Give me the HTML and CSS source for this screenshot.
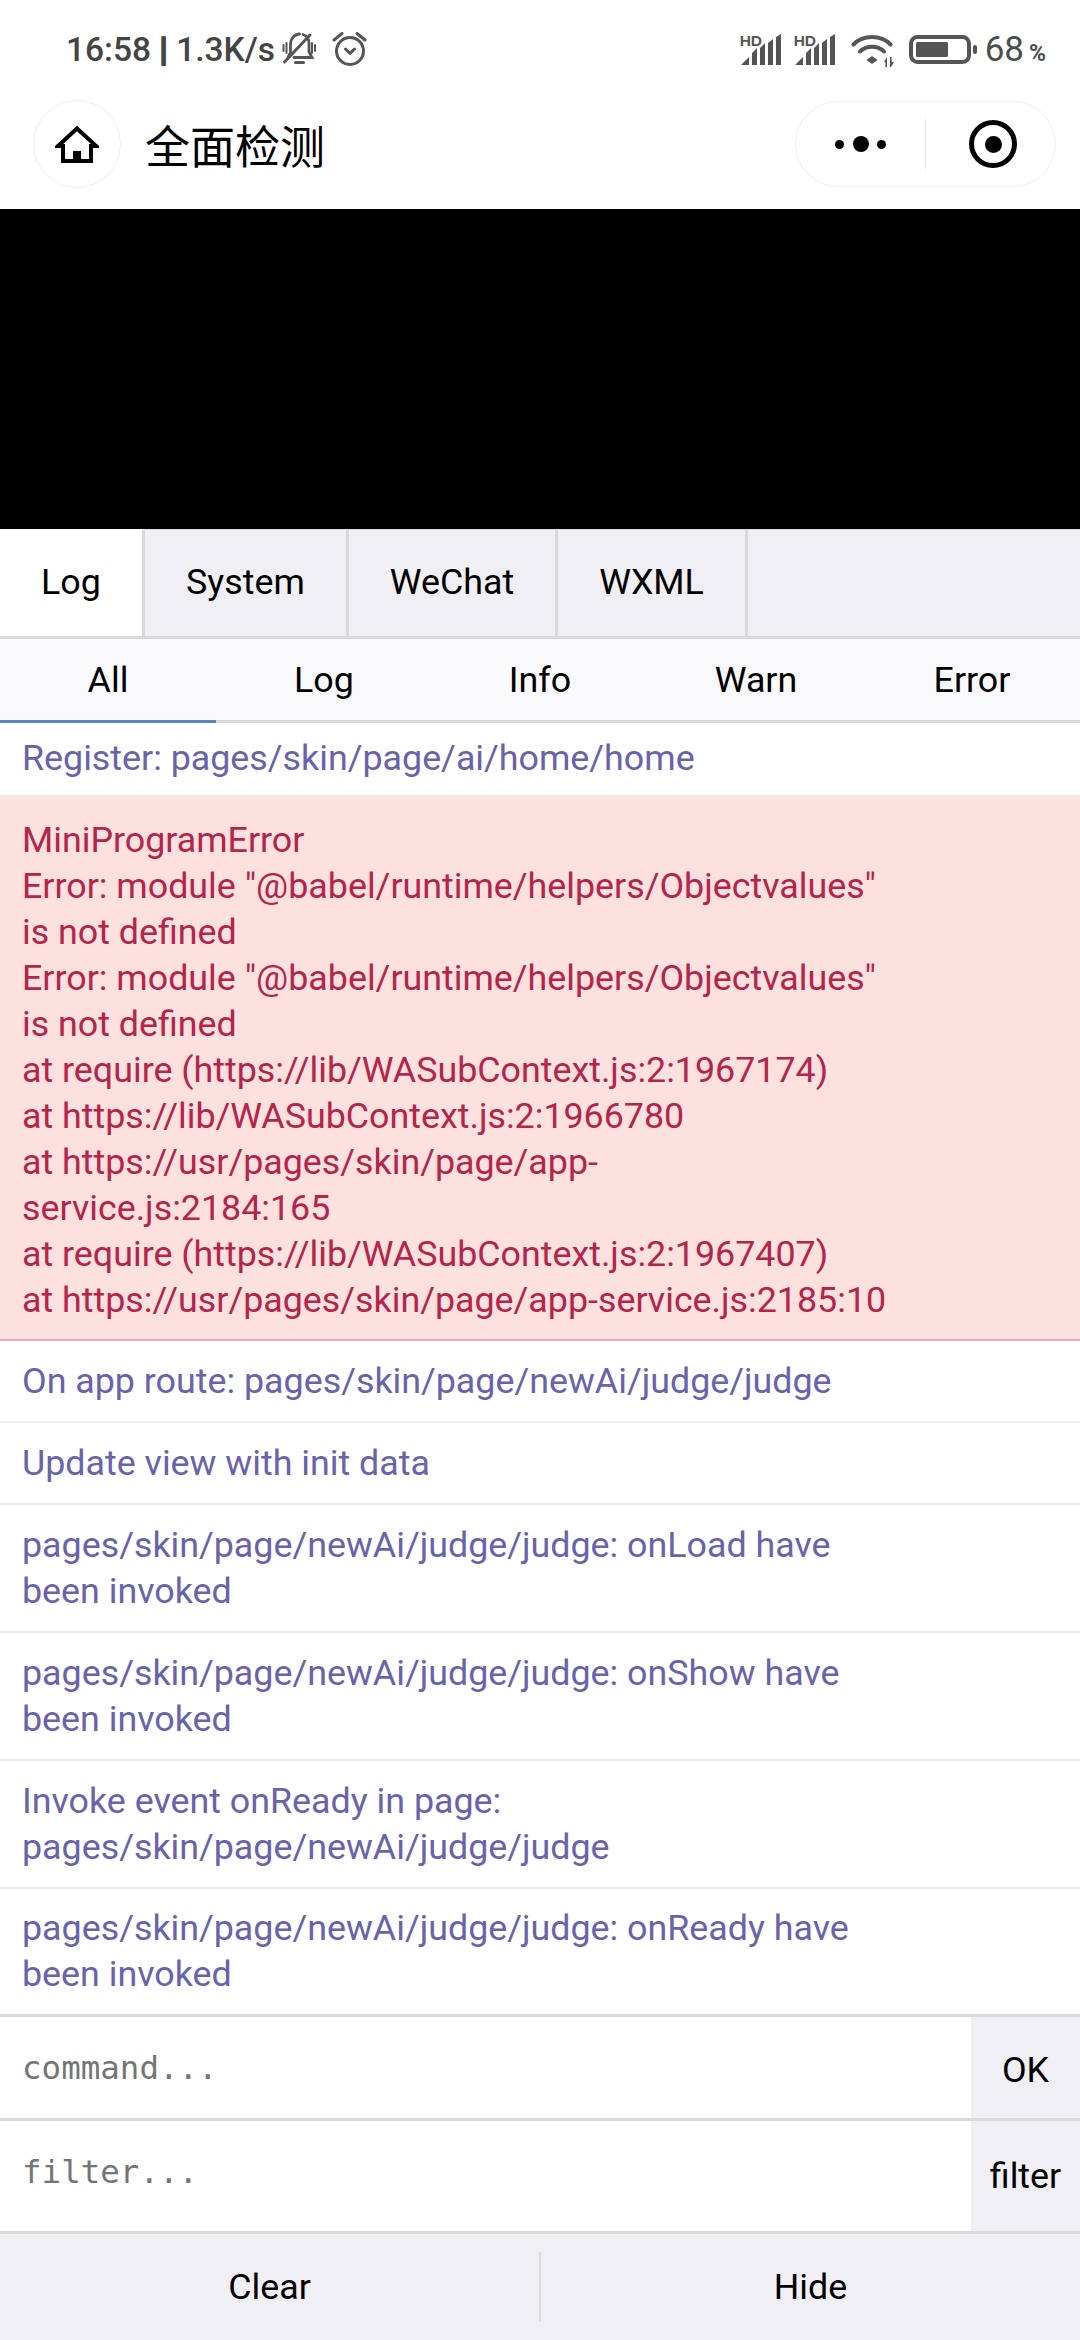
FILE: index.html
```html
<!DOCTYPE html>
<html lang="zh">
<head>
<meta charset="utf-8">
<title>全面检测</title>
<link rel="stylesheet" href="styles.css">
</head>
<body>
<div class="app">
  <div class="status">
    <div class="status-left">
      <span class="time">16:58 <span class="sep">|</span> 1.3K/s</span>
      <svg class="ic-bell" viewBox="0 0 35 34"><g fill="none" stroke="#555" stroke-linecap="round"><path stroke-width="2.8" d="M21 2.500c3.500 1 6 4.500 6 9V20l3 5.500H12"/><path stroke-width="2.800" d="M6 25.500l2.500-5V12c0-5 4-10 9-10"/><path stroke-width="3" d="M2.500 30L28 3"/><path stroke-width="2" d="M1.500 13v6M4.500 11v10M30 11v10M33 13v6"/><path stroke-width="3" d="M13.500 30.500h8"/></g></svg>
      <svg class="ic-alarm" viewBox="0 0 35 35"><g fill="none" stroke="#555" stroke-width="3" stroke-linecap="round" stroke-linejoin="round"><circle cx="18" cy="19" r="13.500"/><path d="M13.500 17l4.500 4.300 4.500-4.300"/><path d="M2 8l8-6.500M33 8l-8-6.500"/></g></svg>
    </div>
    <div class="status-right">
      <span class="sig"><b>HD</b><svg viewBox="0 0 41 31"><path fill="#555" d="M1 31l8-8v8zM12 31V19l5-5v17zM20 31V14l5-5v22zM28 31V9l5-4v26zM36 31V3l5-3v31z"/></svg></span>
      <span class="sig"><b>HD</b><svg viewBox="0 0 41 31"><path fill="#555" d="M1 31l8-8v8zM12 31V19l5-5v17zM20 31V14l5-5v22zM28 31V9l5-4v26zM36 31V3l5-3v31z"/></svg></span>
      <svg class="ic-wifi" viewBox="0 0 43 34"><g fill="none" stroke="#555" stroke-width="4" stroke-linecap="round"><path d="M2.500 11.500C12 1.500 30 1.500 39.500 11.500"/><path d="M9 18.500C15 12 27 12 33 18.500"/></g><path fill="#555" d="M15.500 27l5.500-4 5.500 4-5.500 4zM33 29l3-5v10h-1.600v-5zM39 24h1.600v5H43l-3 5h-1z"/></svg>
      <svg class="ic-batt" viewBox="0 0 68 29"><rect x="2" y="2" width="58" height="25" rx="6.500" fill="none" stroke="#555" stroke-width="4"/><rect x="7" y="7" width="32" height="15" rx="1.500" fill="#555"/><rect x="64" y="10" width="4" height="9" rx="2" fill="#555"/></svg>
      <span class="pct">68<small>%</small></span>
    </div>
  </div>
  <div class="nav">
    <div class="home"><svg viewBox="0 0 44 38"><path fill="none" stroke="#000" stroke-width="4" stroke-linejoin="miter" d="M8 21H3L22 3.500 41 21H36V36H8Z"/><path fill="#000" d="M18 26h8v10h-8z"/></svg></div>
    <div class="title">全面检测</div>
    <div class="capsule">
      <div class="dots"><i></i><i class="big"></i><i></i></div>
      <div class="cap-line"></div>
      <div class="target"><i></i></div>
    </div>
  </div>
  <div class="black"></div>
  <div class="tabs">
    <div class="tab active t1">Log</div>
    <div class="tab t2">System</div>
    <div class="tab t3">WeChat</div>
    <div class="tab t4">WXML</div>
    <div class="tab-fill"></div>
  </div>
  <div class="subtabs">
    <div class="sub active">All</div>
    <div class="sub">Log</div>
    <div class="sub">Info</div>
    <div class="sub">Warn</div>
    <div class="sub">Error</div>
  </div>
  <div class="logs">
    <div class="row r-first">Register: pages/skin/page/ai/home/home</div>
    <div class="row err">MiniProgramError<br>Error: module "@babel/runtime/helpers/Objectvalues"<br>is not defined<br>Error: module "@babel/runtime/helpers/Objectvalues"<br>is not defined<br>at require (https://lib/WASubContext.js:2:1967174)<br>at https://lib/WASubContext.js:2:1966780<br>at https://usr/pages/skin/page/app-<br>service.js:2184:165<br>at require (https://lib/WASubContext.js:2:1967407)<br>at https://usr/pages/skin/page/app-service.js:2185:10</div>
    <div class="row">On app route: pages/skin/page/newAi/judge/judge</div>
    <div class="row">Update view with init data</div>
    <div class="row">pages/skin/page/newAi/judge/judge: onLoad have<br>been invoked</div>
    <div class="row">pages/skin/page/newAi/judge/judge: onShow have<br>been invoked</div>
    <div class="row">Invoke event onReady in page:<br>pages/skin/page/newAi/judge/judge</div>
    <div class="row last">pages/skin/page/newAi/judge/judge: onReady have<br>been invoked</div>
  </div>
  <div class="cmd c1"><div class="ph">command...</div><div class="btn">OK</div></div>
  <div class="cmd c2"><div class="ph">filter...</div><div class="btn">filter</div></div>
  <div class="bottom">
    <div class="bb">Clear</div>
    <div class="bdiv"></div>
    <div class="bb">Hide</div>
  </div>
</div>
</body>
</html>
```

FILE: styles.css
```css
* { box-sizing: border-box; }
html, body { margin: 0; padding: 0; background: #fff; }
.app { width: 1080px; height: 2340px; display: flex; flex-direction: column; overflow: hidden; font-family: Roboto, "Noto Sans CJK SC", sans-serif; color: #000; }

.status { height: 100px; flex: none; display: flex; justify-content: space-between; align-items: center; padding: 0 34px 2px 66px; }
.status-left, .status-right { display: flex; align-items: center; }
.time { font-size: 33.5px; font-weight: 500; color: #444; white-space: nowrap; }
.sep { font-weight: 900; -webkit-text-stroke: 1.5px #444; }
.ic-bell { width: 35px; height: 34px; margin-left: 7px; }
.ic-alarm { width: 35px; height: 35px; margin-left: 15px; }
.sig { position: relative; width: 41px; height: 31px; display: block; margin-right: 13px; }
.sig svg { position: absolute; left: 0; top: 0; width: 41px; height: 31px; }
.sig b { position: absolute; left: 0; top: -1px; font: 700 15.5px/1 "Liberation Sans", sans-serif; color: #555; }
.ic-wifi { width: 43px; height: 34px; margin-left: 3px; margin-top: 2px; }
.ic-batt { width: 68px; height: 29px; margin-left: 15px; }
.pct { font-size: 35px; color: #4d4d4d; margin-left: 8px; white-space: nowrap; }
.pct small { font-size: 23px; font-weight: 700; margin-left: 5px; }

.nav { height: 109px; flex: none; display: flex; align-items: flex-start; padding: 0 24px 0 33px; }
.home { width: 88px; height: 88px; border-radius: 50%; border: 1px solid #eee; display: flex; align-items: center; justify-content: center; flex: none; }
.home svg { width: 44px; height: 38px; }
.title { font-size: 45px; margin-left: 24px; line-height: 90px; font-family: "Noto Sans CJK SC", sans-serif; }
.capsule { margin: 1px 0 0 auto; width: 261px; height: 86px; border: 1px solid #eee; border-radius: 43px; display: flex; align-items: center; }
.dots { width: 129px; display: flex; align-items: center; justify-content: center; gap: 8.5px; flex: none; }
.dots i { width: 9px; height: 9px; border-radius: 50%; background: #000; display: block; }
.dots .big { width: 16px; height: 16px; }
.cap-line { width: 1px; height: 50px; background: #e5e5e5; flex: none; }
.target { width: 48px; height: 48px; border-radius: 50%; border: 5.5px solid #000; margin-left: 43px; display: flex; align-items: center; justify-content: center; flex: none; }
.target i { display: block; width: 17px; height: 17px; border-radius: 50%; background: #000; }

.black { height: 320px; flex: none; background: #000; }

.tabs { height: 110px; flex: none; display: flex; background: #efeff4; border-bottom: 3px solid #d9d9d9; font-size: 35.8px; }
.tab { display: flex; align-items: center; justify-content: center; border-right: 3px solid #d9d9d9; border-top: 1px solid #d9d9d9; padding-bottom: 3px; }
.tab.active { background: #fff; border-top-color: #fff; }
.tab-fill { flex: 1; border-top: 1px solid #d9d9d9; }
.t1 { width: 145px; }
.t2 { width: 204px; }
.t3 { width: 209px; }
.t4 { width: 190px; }

.subtabs { height: 84px; flex: none; display: flex; background: #f9f9fc; border-bottom: 3px solid #d9d9d9; font-size: 35.8px; }
.sub { flex: 1; display: flex; align-items: center; justify-content: center; position: relative; }
.sub.active::after { content: ""; position: absolute; left: 0; right: 0; bottom: -3px; height: 3px; background: #5b82c0; }

.logs { flex: 1; min-height: 0; overflow: hidden; font-size: 35.8px; line-height: 46px; color: #6863aa; }
.row { padding: 17px 22px; border-bottom: 2px solid #ececec; }
.row.r-first { padding: 12px 22px 14px; }
.row.err { background: #fde1df; color: #b5244a; border-bottom: 2px solid #e8a9b5; padding: 20px 22px 16px; }
.row.last { border-bottom: 0; padding-top: 16px; }

.cmd { flex: none; display: flex; border-top: 3px solid #d9d9d9; }
.c1 { height: 104px; }
.c2 { height: 113px; }
.ph { flex: 1; font-family: "DejaVu Sans Mono", monospace; font-size: 32.5px; color: #757575; padding: 32px 22px 0; }
.btn { width: 109px; background: #efeff4; display: flex; align-items: center; justify-content: center; font-size: 35.8px; padding-top: 4px; }
.c2 .btn { padding-top: 0; }

.bottom { height: 109px; flex: none; display: flex; align-items: center; background: #efeff4; border-top: 3px solid #d9d9d9; font-size: 35.8px; }
.bb { flex: 1; text-align: center; }
.bdiv { width: 2px; height: 70px; background: #dcdcdc; flex: none; }
```
